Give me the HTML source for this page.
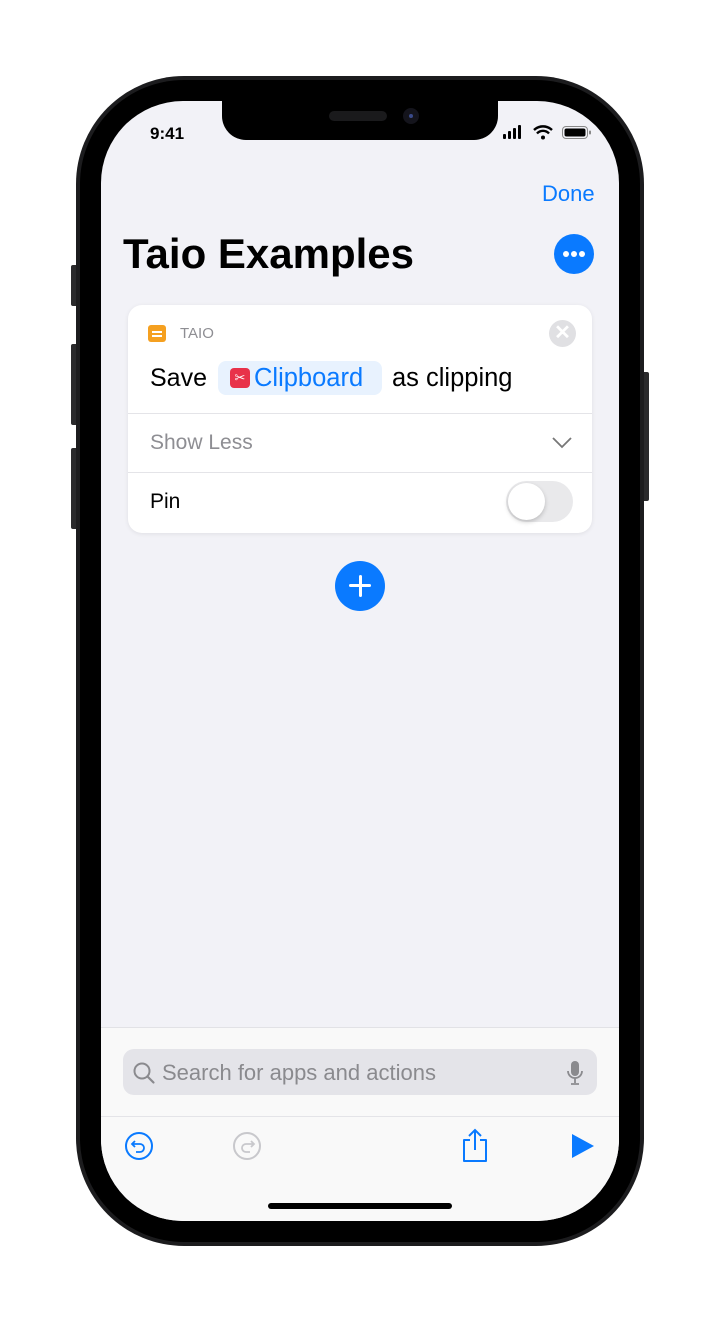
<!DOCTYPE html>
<html><head><style>
*{margin:0;padding:0;box-sizing:border-box}
body{width:720px;height:1322px;background:#fff;position:relative;overflow:hidden;font-family:"Liberation Sans",sans-serif}
.abs{position:absolute}
</style></head><body>
<div class="abs" style="left:71px;top:265px;width:8px;height:41px;background:#2a2a2c;border-radius:2px"></div>
<div class="abs" style="left:71px;top:344px;width:8px;height:81px;background:#2a2a2c;border-radius:2px"></div>
<div class="abs" style="left:71px;top:448px;width:8px;height:81px;background:#2a2a2c;border-radius:2px"></div>
<div class="abs" style="left:641px;top:372px;width:8px;height:129px;background:#2a2a2c;border-radius:2px"></div>
<div class="abs" style="left:76px;top:76px;width:568px;height:1170px;background:#1c1c1e;border-radius:108px"></div>
<div class="abs" style="left:80px;top:80px;width:560px;height:1162px;background:#000;border-radius:104px"></div>
<div class="abs" style="left:101px;top:101px;width:518px;height:1120px;background:#f2f2f7;border-radius:82px;overflow:hidden">
  <div class="abs" style="left:0;top:926px;width:518px;height:200px;background:#f9f9f9;border-top:1px solid #e2e2e6"></div>
  <div class="abs" style="left:22px;top:948px;width:474px;height:46px;background:#e4e4e9;border-radius:11px"></div>
  <div class="abs" style="left:0;top:1015px;width:518px;height:1px;background:#e4e4e8"></div>
</div>
<div class="abs" style="left:222px;top:96px;width:276px;height:44px;background:#000;border-radius:0 0 24px 24px"></div>
<div class="abs" style="left:329px;top:111px;width:58px;height:10px;background:#1a1a1c;border-radius:5px"></div>
<div class="abs" style="left:403px;top:108px;width:16px;height:16px;background:#14141c;border-radius:50%"></div>
<div class="abs" style="left:409px;top:114px;width:4px;height:4px;background:#3a4a8a;border-radius:50%"></div>
<div class="abs" style="left:150px;top:124px;font-size:17px;font-weight:bold;color:#000">9:41</div>
<svg class="abs" style="left:503px;top:125px" width="92" height="16">
<rect x="0" y="9" width="3" height="5" rx="1"/><rect x="5" y="6" width="3" height="8" rx="1"/><rect x="10" y="3" width="3" height="11" rx="1"/><rect x="15" y="0" width="3" height="14" rx="1"/>
<path d="M31 5a13 13 0 0 1 18 0" stroke="#000" stroke-width="2.4" fill="none"/><path d="M34 8.5a8 8 0 0 1 12 0" stroke="#000" stroke-width="2.4" fill="none"/><circle cx="40" cy="12.5" r="2"/>
<rect x="59.5" y="1.5" width="25" height="12" rx="3.5" fill="none" stroke="#888" stroke-width="1"/><rect x="61.5" y="3.5" width="21" height="8" rx="2"/><rect x="86" y="5.5" width="2" height="4" rx="1" fill="#888"/>
</svg>
<div class="abs" style="left:542px;top:181px;font-size:22px;color:#0a7aff">Done</div>
<div class="abs" style="left:123px;top:230px;font-size:42px;font-weight:bold;color:#000;letter-spacing:0">Taio Examples</div>
<div class="abs" style="left:554px;top:234px;width:40px;height:40px;background:#0a7aff;border-radius:50%"></div>
<div class="abs" style="left:563px;top:251px;width:6px;height:6px;background:#fff;border-radius:50%;box-shadow:8px 0 #fff,16px 0 #fff"></div>
<div class="abs" style="left:128px;top:305px;width:464px;height:228px;background:#fff;border-radius:14px;box-shadow:0 1px 5px rgba(0,0,0,.08)">
  <div class="abs" style="left:20px;top:20px;width:18px;height:17px;background:#f5a020;border-radius:3px"></div>
  <div class="abs" style="left:24px;top:26px;width:10px;height:2px;background:#fff;box-shadow:0 4px #fff"></div>
  <div class="abs" style="left:52px;top:20px;font-size:15px;color:#8e8e93">TAIO</div>
  <div class="abs" style="left:421px;top:15px;width:27px;height:27px;background:#e0e0e3;border-radius:50%;color:#fff;font-size:20px;font-weight:bold;text-align:center;line-height:27px">✕</div>
  <div class="abs" style="left:22px;top:59px;font-size:25px;color:#000">Save</div>
  <div class="abs" style="left:90px;top:56px;width:164px;height:34px;background:#e8f2fe;border-radius:8px"></div>
  <div class="abs" style="left:102px;top:63px;width:20px;height:20px;background:#e8324a;border-radius:4px;color:#fff;font-size:13px;text-align:center;line-height:20px">✂</div>
  <div class="abs" style="left:126px;top:59px;font-size:25.5px;color:#0a7aff">Clipboard</div>
  <div class="abs" style="left:264px;top:59px;font-size:25.5px;color:#000">as clipping</div>
  <div class="abs" style="left:0;top:108px;width:464px;height:1px;background:#e4e4e8"></div>
  <div class="abs" style="left:22px;top:126px;font-size:21px;color:#8e8e93">Show Less</div>
  <svg class="abs" style="left:424px;top:132px" width="20" height="12"><path d="M1 1l9 9 9-9" stroke="#777" stroke-width="1.8" fill="none"/></svg>
  <div class="abs" style="left:0;top:167px;width:464px;height:1px;background:#e4e4e8"></div>
  <div class="abs" style="left:22px;top:185px;font-size:21px;color:#000">Pin</div>
  <div class="abs" style="left:378px;top:176px;width:67px;height:41px;background:#e9e9eb;border-radius:21px"></div>
  <div class="abs" style="left:380px;top:178px;width:37px;height:37px;background:#fff;border-radius:50%;box-shadow:0 2px 5px rgba(0,0,0,.2)"></div>
</div>
<div class="abs" style="left:335px;top:561px;width:50px;height:50px;background:#0a7aff;border-radius:50%"></div>
<div class="abs" style="left:349px;top:584px;width:22px;height:3px;background:#fff;border-radius:2px"></div>
<div class="abs" style="left:358.5px;top:575px;width:3px;height:22px;background:#fff;border-radius:2px"></div>
<svg class="abs" style="left:132px;top:1061px" width="24" height="24"><circle cx="10" cy="10" r="7.5" stroke="#8a8a8e" stroke-width="2" fill="none"/><path d="M15.5 15.5l6 6" stroke="#8a8a8e" stroke-width="2.2" stroke-linecap="round"/></svg>
<div class="abs" style="left:162px;top:1060px;font-size:22px;color:#8a8a8e">Search for apps and actions</div>
<svg class="abs" style="left:565px;top:1060px" width="20" height="28"><rect x="6" y="1" width="8" height="15" rx="4" fill="#8a8a8e"/><path d="M3 11a7 7 0 0 0 14 0M10 18v5M6 24h8" stroke="#8a8a8e" stroke-width="1.8" fill="none"/></svg>
<svg class="abs" style="left:124px;top:1131px" width="30" height="30"><circle cx="15" cy="15" r="13" stroke="#0a7aff" stroke-width="2" fill="none"/><path d="M11 10l-3 3 3 3M8 13h8a4 4 0 0 1 0 8h-4" stroke="#0a7aff" stroke-width="1.8" fill="none"/></svg>
<svg class="abs" style="left:232px;top:1131px" width="30" height="30"><circle cx="15" cy="15" r="13" stroke="#c8c8cc" stroke-width="2" fill="none"/><path d="M19 10l3 3-3 3M22 13h-8a4 4 0 0 0 0 8h4" stroke="#c8c8cc" stroke-width="1.8" fill="none"/></svg>
<svg class="abs" style="left:460px;top:1128px" width="30" height="36"><path d="M10 12H4v21h22V12h-6" stroke="#0a7aff" stroke-width="2" fill="none" stroke-linejoin="round"/><path d="M15 2v20M9 8l6-6 6 6" stroke="#0a7aff" stroke-width="2" fill="none"/></svg>
<svg class="abs" style="left:571px;top:1133px" width="24" height="26"><path d="M1 1l22 12-22 12z" fill="#0a7aff"/></svg>
<div class="abs" style="left:268px;top:1203px;width:184px;height:6px;background:#000;border-radius:3px"></div>
</body></html>
